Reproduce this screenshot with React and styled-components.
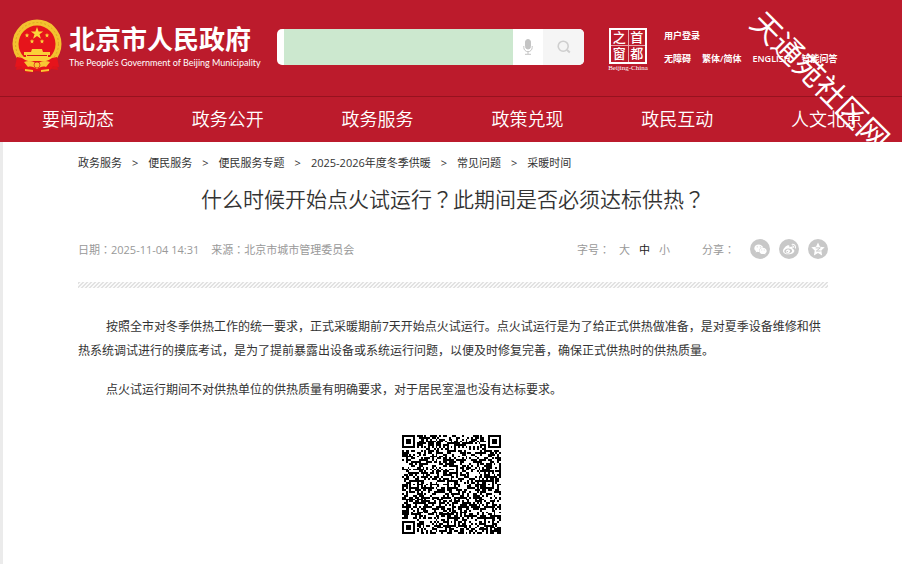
import React, { useState } from "react";
import styled, { createGlobalStyle } from "styled-components";
import { FaWeixin, FaWeibo } from "react-icons/fa";

const navItems = ["要闻动态", "政务公开", "政务服务", "政策兑现", "政民互动", "人文北京"];

const crumbs = [
  "政务服务",
  "便民服务",
  "便民服务专题",
  "2025-2026年度冬季供暖",
  "常见问题",
  "采暖时间",
];

const sizes = ["大", "中", "小"];

const QR_SIZE = 53;

// dark modules of the code: finders, alignment marks, timing lines, then data
const buildModules = () => {
  let seed = 20251104;
  const next = () => {
    seed = (seed * 1103515245 + 12345) % 2147483648;
    return seed / 2147483648;
  };
  const ring = (dx, dy) => Math.max(Math.abs(dx), Math.abs(dy));
  const end = QR_SIZE - 4;
  const finders = [[3, 3], [end, 3], [3, end]];
  const marks = [[26, 6], [6, 26], [26, 26], [46, 26], [26, 46], [46, 46]];
  let path = "";

  for (let y = 0; y < QR_SIZE; y++) {
    for (let x = 0; x < QR_SIZE; x++) {
      let dark = next() > 0.48;
      if (x === 6) dark = y % 2 === 0;
      if (y === 6) dark = x % 2 === 0;
      marks.forEach(([mx, my]) => {
        const r = ring(x - mx, y - my);
        if (r <= 2) dark = r !== 1;
      });
      finders.forEach(([fx, fy]) => {
        const r = ring(x - fx, y - fy);
        if (r <= 4) dark = r !== 2 && r !== 4;
      });
      if (dark) path += `M${x} ${y}h1v1h-1z`;
    }
  }
  return path;
};

const qrPath = buildModules();

const Emblem = () => (
  <svg width="50" height="56" viewBox="0 0 50 56" aria-hidden="true">
    <path d="M6 40l6-2h26l6 2 2 11-7-1-4 4-10-2-10 2-4-4-7 1z" fill="#dc151b" />
    <circle cx="25" cy="25" r="24.500" fill="#f3c22f" />
    <circle cx="25" cy="25" r="21.500" fill="none" stroke="#dfa424" strokeWidth="1" strokeDasharray="2 2" />
    <circle cx="25" cy="25" r="18.500" fill="#e6141b" />
    <path d="M25 8l1.600 4.400 4.600.1-3.700 2.800 1.400 4.500-3.900-2.700-3.900 2.700 1.400-4.500-3.700-2.800 4.600-.1z" fill="#fbd63c" />
    <g fill="#fbd63c">
      <path id="s" d="M15 14l.6 1.600 1.700.1-1.400 1 .5 1.700-1.400-1-1.400 1 .5-1.700-1.400-1 1.700-.1z" />
      <use href="#s" x="20" />
      <use href="#s" x="5" y="6" />
      <use href="#s" x="15" y="6" />
    </g>
    <path d="M20 30h10l1 3h7v3h-2v2h4l-3 4H13l-3-4h4v-2h-2v-3h7z" fill="#fbcf38" />
    <path d="M15 36h20v1H15z" fill="#d8151c" />
    <path d="M5 38l5 1c4 3 9 4 15 4s11-1 15-4l5-1 2 10-6-1-3 4-13 1-13-1-3-4-6 1z" fill="#e6141b" />
    <path d="M12 43c5-2 9-1 13 2 4-3 8-4 13-2l-4 5c-3-1-6 0-9 2-3-2-6-3-9-2z" fill="#f8c733" />
    <circle cx="25" cy="46" r="3" fill="#f8c733" stroke="#d8151c" strokeWidth=".7" />
    <path d="M13 50l8 1v2l-8-1zM37 50l-8 1v2l8-1z" fill="#f8c733" />
  </svg>
);

const MicIcon = () => (
  <svg width="10" height="16" viewBox="0 0 10 16" fill="none" stroke="#c4c4c4">
    <rect x="2.500" y="0.500" width="5" height="9.500" rx="2.500" fill="#c4c4c4" />
    <path d="M.8 7v1.500a4.200 4.200 0 008.400 0V7M5 13v2M2 15.300h6" />
  </svg>
);

const SearchIcon = () => (
  <svg width="14" height="14" viewBox="0 0 14 14" fill="none" stroke="#cfcfcf" strokeWidth="1.600">
    <circle cx="6.200" cy="6.200" r="5" />
    <path d="M9.800 9.800l3 2.600" strokeWidth="2" />
  </svg>
);

const StarIcon = () => (
  <svg width="14" height="14" viewBox="0 0 14 14">
    <path d="M7 .4l2 4.300 4.700.6-3.400 3.300.8 4.800L7 11.100l-4.100 2.300.8-4.800L.3 5.300 5 4.700z" fill="#fff" />
    <path d="M4.600 5.900h4.700L5.400 9h4.200" fill="none" stroke="#c8c8c8" strokeWidth="1" />
  </svg>
);

const App = () => {
  const [keyword, setKeyword] = useState("");
  const [size, setSize] = useState("中");

  return (
    <>
      <GlobalStyle />
      <Header>
        <TopBar>
          <Brand href="#">
            <Emblem />
            <BrandText>
              <BrandName>北京市人民政府</BrandName>
              <BrandSub>The People's Government of Beijing Municipality</BrandSub>
            </BrandText>
          </Brand>

          <SearchForm onSubmit={(e) => e.preventDefault()}>
            <SearchInput
              type="text"
              aria-label="搜索"
              value={keyword}
              onChange={(e) => setKeyword(e.target.value)}
            />
            <MicButton type="button" aria-label="语音">
              <MicIcon />
            </MicButton>
            <SearchButton type="submit" aria-label="搜索">
              <SearchIcon />
            </SearchButton>
          </SearchForm>

          <Seal href="#">
            <SealGrid>
              <SealCell>之</SealCell>
              <SealCell>首</SealCell>
              <SealCell>窗</SealCell>
              <SealCell>都</SealCell>
            </SealGrid>
            <SealCaption>Beijing-China</SealCaption>
          </Seal>

          <UserLinks>
            <LinkRow>
              <TopLink href="#">用户登录</TopLink>
            </LinkRow>
            <LinkRow>
              <TopLink href="#">无障碍</TopLink>
              <TopLink href="#">繁体/简体</TopLink>
              <TopLink href="#">ENGLISH</TopLink>
              <TopLink href="#">智能问答</TopLink>
            </LinkRow>
          </UserLinks>
        </TopBar>

        <Nav>
          {navItems.map((item) => (
            <NavLink href="#" key={item}>
              {item}
            </NavLink>
          ))}
        </Nav>
        <Watermark>天通苑社区网</Watermark>
      </Header>

      <Main>
        <Breadcrumb>
          {crumbs.map((item, i) => (
            <React.Fragment key={item}>
              {i > 0 && <Arrow>&gt;</Arrow>}
              <CrumbLink href="#">{item}</CrumbLink>
            </React.Fragment>
          ))}
        </Breadcrumb>

        <Title>
          什么时候开始点火试运行<Mark>？</Mark>此期间是否必须达标供热<Mark>？</Mark>
        </Title>

        <Meta>
          <MetaGroup $gap="12px">
            <span>
              日期<Mark>：</Mark>2025-11-04 14:31
            </span>
            <span>
              来源<Mark>：</Mark>北京市城市管理委员会
            </span>
          </MetaGroup>
          <Tools>
            <MetaGroup $gap="9px">
              <span>
                字号<Mark>：</Mark>
              </span>
              {sizes.map((s) => (
                <SizeButton type="button" key={s} $active={s === size} onClick={() => setSize(s)}>
                  {s}
                </SizeButton>
              ))}
            </MetaGroup>
            <MetaGroup $gap="9px">
              <ShareLabel>
                分享<Mark>：</Mark>
              </ShareLabel>
              <ShareLink href="#" aria-label="微信">
                <FaWeixin size={13} />
              </ShareLink>
              <ShareLink href="#" aria-label="微博">
                <FaWeibo size={13} />
              </ShareLink>
              <ShareLink href="#" aria-label="QQ空间">
                <StarIcon />
              </ShareLink>
            </MetaGroup>
          </Tools>
        </Meta>

        <Stripe />

        <Article>
          <p>
            按照全市对冬季供热工作的统一要求，正式采暖期前7天开始点火试运行。点火试运行是为了给正式供热做准备，是对夏季设备维修和供热系统调试进行的摸底考试，是为了提前暴露出设备或系统运行问题，以便及时修复完善，确保正式供热时的供热质量。
          </p>
          <p>点火试运行期间不对供热单位的供热质量有明确要求，对于居民室温也没有达标要求。</p>
        </Article>

        <QrBox>
          <QrCode viewBox={`0 0 ${QR_SIZE} ${QR_SIZE}`} shapeRendering="crispEdges">
            <path d={qrPath} />
          </QrCode>
        </QrBox>
      </Main>
    </>
  );
};

const GlobalStyle = createGlobalStyle`
  * {
    box-sizing: border-box;
  }

  html, body, #root {
    height: 100%;
  }

  body {
    margin: 0;
    background: #fff;
    color: #333;
    font-family: "Open Sans", "Noto Sans CJK SC", sans-serif;
    font-size: 12px;
  }

  #root {
    display: flex;
    flex-direction: column;
  }

  a {
    color: inherit;
    text-decoration: none;
  }

  button {
    border: none;
    padding: 0;
    background: none;
    font: inherit;
    cursor: pointer;
  }

  svg {
    display: block;
    flex: none;
  }
`;

const Header = styled.header`
  position: relative;
  flex: none;
  background: #bc1b2c;
  color: #fff;
`;

const TopBar = styled.div`
  display: flex;
  align-items: center;
  height: 96px;
  padding: 0 12px 2px;
`;

const Brand = styled.a`
  display: flex;
  align-items: center;
  gap: 7px;
  width: 265px;
`;

const BrandText = styled.div`
  display: flex;
  flex-direction: column;
  white-space: nowrap;
`;

const BrandName = styled.span`
  font-size: 26px;
  line-height: 32px;
  font-weight: 700;
`;

const BrandSub = styled.span`
  font-family: "Liberation Sans Narrow", Lato, sans-serif;
  font-size: 9px;
  line-height: 16px;
`;

const SearchForm = styled.form`
  display: flex;
  width: 307px;
  height: 36px;
  padding-left: 7px;
  border-radius: 5px;
  overflow: hidden;
  background: #fff;
`;

const SearchInput = styled.input`
  flex: 1;
  min-width: 0;
  border: none;
  padding: 0 8px;
  outline: none;
  background: #cce8cf;
  font: inherit;
`;

const MicButton = styled.button`
  display: grid;
  place-items: center;
  width: 30px;
`;

const SearchButton = styled.button`
  display: grid;
  place-items: center;
  width: 41px;
  background: #f5f5f5;
`;

const Seal = styled.a`
  display: flex;
  flex-direction: column;
  align-items: center;
  gap: 1px;
  margin-left: 23px;
  padding-top: 4px;
  width: 42px;
`;

const SealGrid = styled.div`
  display: grid;
  grid-template-columns: 1fr 1fr;
  gap: 1px;
  width: 38px;
  height: 36px;
  border: 2px solid #fff;
  background: #e9a9af;
`;

const SealCell = styled.span`
  display: grid;
  place-items: center;
  background: #bc1b2c;
  font-size: 13px;
  line-height: 15px;
  font-weight: 500;
`;

const SealCaption = styled.span`
  font-family: "Liberation Serif", serif;
  font-size: 7px;
  line-height: 6px;
  white-space: nowrap;
`;

const UserLinks = styled.div`
  display: flex;
  flex-direction: column;
  gap: 9px;
  margin-left: 15px;
`;

const LinkRow = styled.div`
  display: flex;
  gap: 11px;
  white-space: nowrap;
`;

const TopLink = styled.a`
  font-size: 9px;
  line-height: 14px;
  font-weight: 600;
`;

const Nav = styled.nav`
  display: grid;
  grid-template-columns: repeat(6, 1fr);
  padding-left: 3px;
  border-top: 1px solid #97121f;
`;

const NavLink = styled.a`
  font-size: 18px;
  line-height: 45px;
  font-weight: 350;
  text-align: center;
`;

const Watermark = styled.span`
  position: absolute;
  top: 61px;
  right: -8px;
  font-size: 30px;
  line-height: 40px;
  font-weight: 400;
  white-space: nowrap;
  transform: rotate(45deg);
  pointer-events: none;
`;

const Main = styled.main`
  flex: 1 0 auto;
  padding: 11px 74px 0 75px;
  border-left: 3px solid #ebebeb;
`;

const Breadcrumb = styled.nav`
  display: flex;
  gap: 10px;
  font-size: 11px;
  line-height: 20px;
  white-space: nowrap;
`;

const CrumbLink = styled.a`
  color: #333;
`;

const Arrow = styled.span`
  color: #333;
`;

const Title = styled.h1`
  margin: 9px 0 0;
  font-size: 21px;
  line-height: 32px;
  font-weight: 350;
  text-align: center;
`;

// keeps ？ and ： in the middle of their square
const Mark = styled.span`
  font-family: "Noto Sans CJK TC", sans-serif;
`;

const Meta = styled.div`
  display: flex;
  justify-content: space-between;
  align-items: center;
  margin-top: 22px;
  height: 24px;
  color: #999;
  font-size: 11px;
`;

const MetaGroup = styled.div`
  display: flex;
  align-items: center;
  gap: ${(props) => props.$gap};
`;

const Tools = styled.div`
  display: flex;
  gap: 32px;
`;

const SizeButton = styled.button`
  color: ${(props) => (props.$active ? "#222" : "#999")};
`;

const ShareLabel = styled.span`
  margin-right: 6px;
`;

const ShareLink = styled.a`
  display: grid;
  place-items: center;
  width: 20px;
  height: 20px;
  border-radius: 50%;
  background: #c8c8c8;
  color: #fff;
`;

const Stripe = styled.div`
  height: 6px;
  margin-top: 21px;
  background-image: linear-gradient(
    135deg,
    #e2e2e2 25%,
    #fafafa 25% 50%,
    #e2e2e2 50% 75%,
    #fafafa 75%
  );
  background-size: 4px 4px;
`;

const Article = styled.article`
  margin-top: 27px;
  font-size: 12px;
  line-height: 24px;

  p {
    margin: 0 0 15px;
    padding: 0;
    text-indent: 28px;
  }
`;

const QrBox = styled.div`
  display: flex;
  justify-content: center;
  padding: 18px 4px 30px 0;
`;

const QrCode = styled.svg`
  width: 99px;
  height: 99px;
`;

export default App;
